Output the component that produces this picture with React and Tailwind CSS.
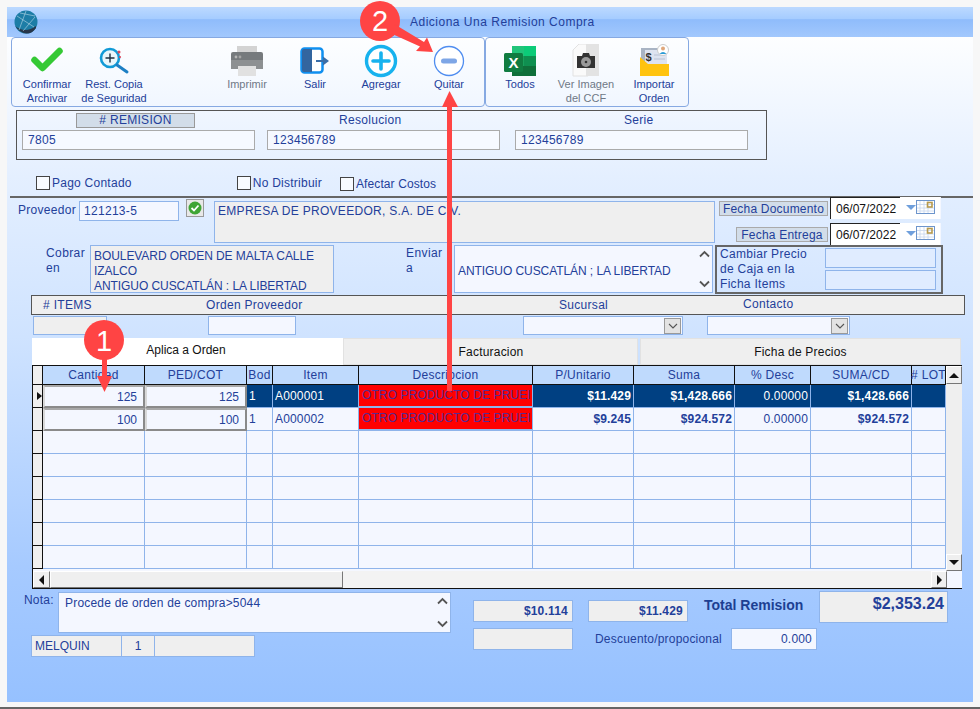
const font = "font-['Liberation_Sans',Arial,sans-serif]";

function Chevron({ up }) {
  return (
    <svg width="11" height="8" viewBox="0 0 11 8">
      <path d={up ? "M1 6.5 5.5 2 10 6.5" : "M1 1.5 5.5 6 10 1.5"} fill="none" stroke="#555" strokeWidth="1.8" />
    </svg>
  );
}

function VScroll() {
  return (
    <div className="w-[16px] shrink-0 self-stretch flex flex-col items-center justify-between bg-[#f4f7ff] py-[4px]">
      <Chevron up />
      <Chevron />
    </div>
  );
}

function ToolButton({ icon, lines, muted, className = "" }) {
  return (
    <div className={`w-[66px] shrink-0 flex flex-col items-center pt-[6px] text-[11px] leading-[14px] ${muted ? "text-[#6f7886]" : "text-[#23409a]"} ${className}`}>
      <div className="h-[33px] w-full flex items-center justify-center">{icon}</div>
      {lines.map((l) => (
        <span key={l} className="whitespace-nowrap">{l}</span>
      ))}
    </div>
  );
}

const IconCheck = () => (
  <svg width="36" height="30" viewBox="0 0 36 30"><path d="M5.500 14 13.500 22 30.500 5" fill="none" stroke="#35c935" strokeWidth="6.500" strokeLinecap="round" strokeLinejoin="round" /></svg>
);
const IconSearch = () => (
  <svg width="32" height="30" viewBox="0 0 32 30">
    <circle cx="12" cy="12" r="9" fill="#e9f6fb" stroke="#119ad6" strokeWidth="2.6" />
    <path d="M12 7.5v9M7.5 12h9" stroke="#1f2f3f" strokeWidth="1.4" />
    <path d="M19 19 29 26" stroke="#1d7fc4" strokeWidth="3" strokeLinecap="round" />
    <circle cx="21" cy="6" r="1.5" fill="#e0475a" />
    <circle cx="22" cy="11" r="1.1" fill="#e0475a" />
  </svg>
);
const IconPrinter = () => (
  <svg width="34" height="32" viewBox="0 0 34 32">
    <rect x="7" y="1" width="20" height="8" fill="#d3d3d3" />
    <path d="M1 9q0-2 2-2h28q2 0 2 2v15H1z" fill="#767a7d" />
    <rect x="1" y="15" width="32" height="9" fill="#8d9092" />
    <circle cx="6" cy="12" r="1.4" fill="#b5b5b5" /><circle cx="10" cy="12" r="1.4" fill="#a5a5a5" />
    <rect x="8" y="21" width="18" height="10" fill="#e1e1e1" />
  </svg>
);
const IconExit = () => (
  <svg width="30" height="30" viewBox="0 0 30 30">
    <rect x="1.5" y="2.5" width="21" height="24" rx="3" fill="#fff" stroke="#0f8ff0" strokeWidth="2.5" />
    <path d="M2 5q0-2 2-2h8v23H4q-2 0-2-2z" fill="#33659f" />
    <path d="M16 15h8" stroke="#3a6ea8" strokeWidth="2" />
    <path d="M23 10.5 29 15l-6 4.5z" fill="#3a6ea8" />
  </svg>
);
const IconPlus = () => (
  <svg width="34" height="34" viewBox="0 0 34 34">
    <circle cx="17" cy="17" r="14.5" fill="#fff" stroke="#17b2ee" strokeWidth="3.4" />
    <path d="M17 9v16M9 17h16" stroke="#17b2ee" strokeWidth="3.6" strokeLinecap="round" />
  </svg>
);
const IconMinus = () => (
  <svg width="32" height="32" viewBox="0 0 32 32">
    <circle cx="16" cy="16" r="14.5" fill="#fff" stroke="#4f8df0" strokeWidth="1.3" />
    <rect x="8" y="13.5" width="16" height="5" rx="2.5" fill="#7ea6e6" />
  </svg>
);
const IconExcel = () => (
  <svg width="34" height="32" viewBox="0 0 34 32">
    <rect x="9" y="1" width="24" height="10" fill="#21c47a" />
    <rect x="9" y="11" width="24" height="10" fill="#19a05b" />
    <rect x="9" y="21" width="24" height="10" fill="#0f6f3a" />
    <rect x="21" y="1" width="12" height="10" fill="#0ccb78" />
    <rect x="21" y="11" width="12" height="10" fill="#0f8f50" />
    <rect x="1" y="8" width="19" height="19" rx="1.5" fill="#107c41" />
    <text x="10.5" y="23" textAnchor="middle" fontFamily="Liberation Sans" fontWeight="700" fontSize="15" fill="#fff">X</text>
  </svg>
);
const IconCamera = () => (
  <svg width="28" height="33" viewBox="0 0 28 33">
    <path d="M1 6 7 0h9v32H1z" fill="#fafafa" stroke="#e2e2e2" />
    <rect x="14" y="0" width="13" height="32" fill="#e3e3e3" />
    <path d="M5 12h5l1-3h6l1 3h5v12H5z" fill="#333" />
    <circle cx="14" cy="18" r="5" fill="#9a9a9a" />
    <circle cx="14" cy="18" r="1.3" fill="#333" />
  </svg>
);
const IconImport = () => (
  <svg width="31" height="34" viewBox="0 0 31 34">
    <rect x="2" y="4" width="26" height="20" fill="#a9b4c4" />
    <rect x="6" y="6" width="22" height="18" fill="#dde3f0" />
    <text x="9.5" y="17" textAnchor="middle" fontFamily="Liberation Sans" fontWeight="700" fontSize="11" fill="#333">$</text>
    <path d="M15 11h11M15 15h11" stroke="#b9c2d4" />
    <path d="M1 13 9 20h21v12H1z" fill="#ffc30f" />
    <circle cx="24" cy="6" r="5.5" fill="#fff" stroke="#ccc" />
    <circle cx="24" cy="4.5" r="2" fill="#e0a77b" />
    <path d="M20.5 10q3.5-4 7 0z" fill="#2a9bd6" />
  </svg>
);

const inputBase = "border border-[#8fb4ea] bg-[#f4f7ff] text-[#23409a]";
const grayBase = "border border-[#8fb4ea] bg-[#efefef] text-[#23409a]";

function Check({ label, className = "" }) {
  return (
    <div className={`flex items-center ${className}`}>
      <span className="w-[14px] h-[14px] border border-[#444] bg-[#f8fbff]" />
      <span className="ml-[2px] pt-[1px] whitespace-nowrap">{label}</span>
    </div>
  );
}

function DateBox() {
  return (
    <div className="w-[111px] h-[22px] flex bg-white text-[12px] text-[#111] tracking-normal border-r border-[#f4f7ff]">
      <div className="w-[70px] h-[22px] border-l border-t border-[#222] pl-[5px] pt-[2px] flex items-center">06/07/2022</div>
      <div className="flex-1 flex items-center pl-[6px] pb-[2px]">
        <span className="w-0 h-0 border-x-[5px] border-x-transparent border-t-[5px] border-t-[#6f9fdc]" />
        <svg width="19" height="14" viewBox="0 0 19 14">
          <rect x="0.5" y="0.5" width="18" height="13" fill="#fff" stroke="#6d95cc" />
          <path d="M4 1v12M8 1v12M12 1v12M1 4.5h17M1 8h17M1 11h17" stroke="#c6d5ec" strokeWidth="0.8" />
          <rect x="11.5" y="2.5" width="4.5" height="4.5" fill="none" stroke="#b79a4d" strokeWidth="1.6" />
        </svg>
      </div>
    </div>
  );
}

function SelectBox({ w, ml }) {
  return (
    <div className={`${inputBase} ${w} ${ml} h-[19px] flex items-center justify-end pr-[1px]`}>
      <span className="w-[17px] h-[16px] bg-[#e3e3e3] border border-[#999] flex items-center justify-center">
        <svg width="10" height="6" viewBox="0 0 10 6"><path d="M1 1 5 5 9 1" fill="none" stroke="#555" strokeWidth="1.1" /></svg>
      </span>
    </div>
  );
}

const gridCols = "grid grid-cols-[10px_102px_102px_26px_86px_174px_101px_101px_76px_101px_34px]";
const headers = ["Cantidad", "PED/COT", "Bod", "Item", "Descripcion", "P/Unitario", "Suma", "% Desc", "SUMA/CD", "# LOT"];
const rows = [
  { q: "125", b: "1", i: "A000001", p: "$11.429", s: "$1,428.666", d: "0.00000", c: "$1,428.666", sel: true },
  { q: "100", b: "1", i: "A000002", p: "$9.245", s: "$924.572", d: "0.00000", c: "$924.572" },
];

function DataRow({ r }) {
  const cell = `border-r border-b border-[#8fb4ea] h-[23px] flex items-center px-[2px] whitespace-nowrap overflow-hidden tracking-[0.15px] ${r.sel ? "bg-[#004082] text-white" : "bg-[#f4f7ff] text-[#23409a]"}`;
  const bevel = "h-[23px] bg-[#f4f7ff] border-2 border-[#8a8a8a] border-t-[#a8a8a8] border-l-[#d8d8d8] flex items-center justify-end pr-[6px] pt-[1px] text-[#23409a] text-[12px]";
  return (
    <div className={gridCols}>
      <div className="h-[23px] bg-[#efefef] border-r border-b border-[#111] flex items-center">
        {r.sel && <span className="ml-[4px] w-0 h-0 border-y-[4px] border-y-transparent border-l-[5px] border-l-[#111]" />}
      </div>
      <div className={bevel}>{r.q}</div>
      <div className={bevel}>{r.q}</div>
      <div className={cell}>{r.b}</div>
      <div className={cell}>{r.i}</div>
      <div className="h-[23px] bg-[#8fb4ea] pb-[2px] pr-[1px]">
        <div className="h-[21px] bg-[#ff0000] text-[#5a2a92] pl-[3px] flex items-center whitespace-nowrap overflow-hidden tracking-[0.1px]">OTRO PRODUCTO DE PRUEI</div>
      </div>
      <div className={`${cell} justify-end font-bold`}>{r.p}</div>
      <div className={`${cell} justify-end font-bold`}>{r.s}</div>
      <div className={`${cell} justify-end`}>{r.d}</div>
      <div className={`${cell} justify-end font-bold`}>{r.c}</div>
      <div className={cell} />
    </div>
  );
}

function EmptyRow() {
  const cell = "h-[23px] border-r border-b border-[#8fb4ea] bg-[#f4f7ff]";
  return (
    <div className={gridCols}>
      <div className="h-[23px] bg-[#efefef] border-r border-b border-[#111]" />
      {Array.from({ length: 10 }).map((_, i) => (
        <div key={i} className={cell} />
      ))}
    </div>
  );
}

function Triangle({ dir }) {
  const map = {
    up: "border-x-[5px] border-x-transparent border-b-[5px] border-b-[#111]",
    down: "border-x-[5px] border-x-transparent border-t-[5px] border-t-[#111]",
    left: "border-y-[5px] border-y-transparent border-r-[5px] border-r-[#111]",
    right: "border-y-[5px] border-y-transparent border-l-[5px] border-l-[#111]",
  };
  return <span className={`w-0 h-0 ${map[dir]}`} />;
}

const bevelBtn = "bg-[#efefef] border border-[#fff] border-r-[#777] border-b-[#777] flex items-center justify-center";

function DataGrid() {
  return (
    <div className="ml-[25px] w-[930px] h-[224px] border-t border-l border-[#111] flex flex-col bg-[#f4f7ff]">
      <div className="flex h-[205px]">
        <div className="w-[913px] shrink-0 overflow-hidden">
          <div className={gridCols}>
            <div className="h-[19px] bg-[#efefef] border-r border-b border-[#111]" />
            {headers.map((h) => (
              <div key={h} className="h-[19px] bg-[#bfdafd] border-r border-b border-[#111] flex items-center justify-center text-[#23409a] whitespace-nowrap tracking-[0.3px]">
                {h}
              </div>
            ))}
          </div>
          {rows.map((r) => <DataRow key={r.i} r={r} />)}
          {Array.from({ length: 6 }).map((_, i) => <EmptyRow key={i} />)}
        </div>
        <div className="w-[16px] flex flex-col bg-[#efefef]">
          <div className={`${bevelBtn} h-[18px]`}><Triangle dir="up" /></div>
          <div className="flex-1" />
          <div className={`${bevelBtn} h-[17px]`}><Triangle dir="down" /></div>
        </div>
      </div>
      <div className="flex h-[18px] border-b border-[#111]">
        <div className={`${bevelBtn} w-[17px] h-[17px]`}><Triangle dir="left" /></div>
        <div className={`${bevelBtn} w-[293px] h-[17px]`} />
        <div className="w-[588px] h-[17px] bg-[#f3f3f3]" />
        <div className={`${bevelBtn} w-[16px] h-[17px]`}><Triangle dir="right" /></div>
        <div className="flex-1 bg-[#f4f7ff]" />
      </div>
    </div>
  );
}

function Overlay() {
  return (
    <svg className="absolute left-0 top-0 pointer-events-none" width="980" height="709" viewBox="0 0 980 709">
      <g fill="#ff4444" stroke="none">
        <circle cx="380" cy="21" r="20" />
        <circle cx="104" cy="340" r="20" />
        <rect x="447" y="105" width="5" height="286" />
        <path d="M449.5 91 458 107H442z" />
        <rect x="102" y="358" width="5" height="20" />
        <path d="M104.5 392 97 376h15z" />
        <path d="M392 29 395 24.500 424 42 427 37.500 433 52 416 51 420 46.500 390 33z" />
      </g>
      <text x="380" y="31" textAnchor="middle" fontFamily="Liberation Sans" fontSize="29" fill="#fff">2</text>
      <text x="104" y="351" textAnchor="middle" fontFamily="Liberation Sans" fontSize="29" fill="#fff">1</text>
    </svg>
  );
}

export default function App() {
  return (
    <div className={`${font} relative w-[980px] h-[709px] overflow-hidden bg-[#f7f7f7] px-[7px] pt-[7px] text-[12px] leading-[15px] text-[#23409a] border-b-2 border-[#666]`}>
      <div className="w-[966px] h-[695px] flex flex-col bg-[linear-gradient(to_bottom,#fdfeff_30px,#e4efff_170px,#cfe3ff_330px,#a6caff_560px,#96c1ff_100%)]">
        {/* Title bar */}
        <div className="h-[30px] shrink-0 flex items-center bg-[linear-gradient(to_bottom,#bcd9ff_0%,#a5ccff_40%,#8fbcfb_42%,#a2c8fd_100%)]">
          <svg className="ml-[7px]" width="24" height="24" viewBox="0 0 24 24">
            <circle cx="12" cy="12" r="11.500" fill="#1d7da6" />
            <path d="M1 16q10 8 21 0v2q-4 6-10 5.500T1 16z" fill="#27364a" />
            <path d="M3 6 20 17M12 1 5 20M21 6 6 3M21 7 9 21" stroke="#b8d9e8" strokeWidth="0.6" fill="none" />
          </svg>
          <span className="ml-[372px] pt-[1px] text-[12px] tracking-[0.5px] text-[#23409a] whitespace-nowrap">Adiciona Una Remision Compra</span>
        </div>

        {/* Toolbar */}
        <div className="h-[70px] shrink-0 flex ml-[4px]">
          <div className="w-[474px] h-[70px] border border-[#86a9e2] rounded-[4px] flex pl-[2px]">
            <ToolButton icon={<IconCheck />} lines={["Confirmar", "Archivar"]} />
            <ToolButton className="ml-[1px]" icon={<IconSearch />} lines={["Rest. Copia", "de Seguridad"]} />
            <ToolButton className="ml-[67px]" muted icon={<IconPrinter />} lines={["Imprimir"]} />
            <ToolButton className="ml-[2px]" icon={<IconExit />} lines={["Salir"]} />
            <ToolButton icon={<IconPlus />} lines={["Agregar"]} />
            <ToolButton className="ml-[2px]" icon={<IconMinus />} lines={["Quitar"]} />
          </div>
          <div className="w-[204px] h-[70px] border border-[#86a9e2] rounded-[4px] flex pl-[1px]">
            <ToolButton icon={<IconExcel />} lines={["Todos"]} />
            <ToolButton muted icon={<IconCamera />} lines={["Ver Imagen", "del CCF"]} />
            <ToolButton className="ml-[2px]" icon={<IconImport />} lines={["Importar", "Orden"]} />
          </div>
        </div>

        {/* Remision panel */}
        <div className="ml-[9px] mt-[3px] w-[751px] h-[50px] shrink-0 border border-[#555] flex pl-[5px] pt-[2px] tracking-[0.3px]">
          <div className="w-[233px] flex flex-col">
            <div className="ml-[54px] w-[119px] h-[15px] bg-[#d2dde9] border border-[#999] text-center leading-[13px]"># REMISION</div>
            <div className="border border-[#aaa] bg-[#f6f9ff] h-[20px] mt-[2px] pl-[5px] pt-[1px] flex items-center">7805</div>
          </div>
          <div className="w-[233px] ml-[12px] flex flex-col">
            <div className="h-[15px] pl-[72px]">Resolucion</div>
            <div className="border border-[#aaa] bg-[#f6f9ff] h-[20px] mt-[2px] pl-[5px] pt-[1px] flex items-center">123456789</div>
          </div>
          <div className="w-[233px] ml-[15px] flex flex-col">
            <div className="h-[15px] pl-[109px]">Serie</div>
            <div className="border border-[#aaa] bg-[#f6f9ff] h-[20px] mt-[2px] pl-[5px] pt-[1px] flex items-center">123456789</div>
          </div>
        </div>

        {/* Checks */}
        <div className="h-[36px] shrink-0 flex tracking-[0.25px] pt-[15px]">
          <Check className="ml-[29px] h-[15px]" label="Pago Contado" />
          <Check className="ml-[105px] h-[15px]" label="No Distribuir" />
          <Check className="ml-[18px] h-[15px] mt-[1px] tracking-[0.1px]" label="Afectar Costos" />
        </div>
        <div className="ml-[3px] h-[2px] shrink-0 bg-[#666]" />

        {/* Proveedor */}
        <div className="h-[47px] shrink-0 flex items-start tracking-[0.3px]">
          <span className="ml-[11px] mt-[5px] w-[61px]">Proveedor</span>
          <div className={`${inputBase} mt-[3px] w-[100px] h-[20px] pl-[4px] pt-[1px] flex items-center`}>121213-5</div>
          <div className="ml-[7px] mt-[1px] w-[18px] h-[18px] bg-[#e8e8e8] border border-[#999] flex items-center justify-center">
            <svg width="14" height="14" viewBox="0 0 14 14">
              <circle cx="7" cy="7" r="6.500" fill="#3fa535" />
              <path d="M3.500 7 6 9.500 10.500 4.500" fill="none" stroke="#fff" strokeWidth="1.8" />
            </svg>
          </div>
          <div className={`${grayBase} ml-[10px] mt-[3px] w-[501px] h-[42px] px-[3px] pt-[2px]`}>EMPRESA DE PROVEEDOR, S.A. DE C.V.</div>
          <div className="flex flex-col w-[224px] ml-[4px] tracking-[0.2px]">
            <div className="flex h-[25px]">
              <div className="mt-[3px] w-[109px] h-[15px] pt-[1px] bg-[#d2dde9] border border-[#aaa] flex items-center justify-center">Fecha Documento</div>
              <div className="ml-[2px] mt-[-1px]"><DateBox /></div>
            </div>
            <div className="flex">
              <div className="ml-[17px] mt-[4px] w-[92px] h-[15px] pt-[1px] bg-[#d2dde9] border border-[#aaa] flex items-center justify-center">Fecha Entrega</div>
              <div className="ml-[2px]"><DateBox /></div>
            </div>
          </div>
        </div>

        {/* Cobrar / Enviar */}
        <div className="h-[50px] shrink-0 flex items-start tracking-[-0.07px]">
          <span className="ml-[39px] mt-[1px] w-[44px] tracking-[0.4px]">Cobrar<br />en</span>
          <div className={`${grayBase} w-[244px] h-[48px] pl-[3px] pt-[3px]`}>
            BOULEVARD ORDEN DE MALTA CALLE<br />IZALCO<br />ANTIGUO CUSCATLÁN : LA LIBERTAD
          </div>
          <span className="ml-[72px] mt-[1px] w-[48px] tracking-[0.4px]">Enviar<br />a</span>
          <div className={`${inputBase} w-[259px] h-[48px] flex items-center pl-[3px]`}>
            <span className="flex-1 whitespace-nowrap pt-[4px]">ANTIGUO CUSCATLÁN ; LA LIBERTAD</span>
            <VScroll />
          </div>
          <div className="ml-[2px] w-[228px] h-[49px] border-2 border-[#666] flex pl-[3px] tracking-[0.3px]">
            <span className="w-[105px] whitespace-nowrap">Cambiar Precio<br />de Caja en la<br />Ficha Items</span>
            <div className="flex flex-col pt-[1px] gap-[2px]">
              <div className="border border-[#8fb4ea] bg-[#e0ecff] w-[111px] h-[20px]" />
              <div className="border border-[#8fb4ea] bg-[#e0ecff] w-[111px] h-[20px]" />
            </div>
          </div>
        </div>

        {/* Items header */}
        <div className="ml-[24px] w-[934px] h-[20px] shrink-0 bg-[#efefef] border border-[#555] grid grid-cols-[70px_302px_288px_274px] items-center tracking-[0.3px]">
          <span className="text-center pl-[1px]"># ITEMS</span>
          <span className="pl-[104px] whitespace-nowrap">Orden Proveedor</span>
          <span className="pl-[155px] whitespace-nowrap">Sucursal</span>
          <span className="pl-[51px] whitespace-nowrap -mt-[2px]">Contacto</span>
        </div>

        {/* Filters */}
        <div className="h-[19px] mt-[1px] shrink-0 flex">
          <div className={`${grayBase} ml-[26px] w-[74px] h-[19px]`} />
          <div className={`${inputBase} ml-[101px] w-[88px] h-[19px]`} />
          <SelectBox w="w-[160px]" ml="ml-[227px]" />
          <SelectBox w="w-[143px]" ml="ml-[24px]" />
        </div>

        {/* Tabs */}
        <div className="h-[27px] mt-[3px] shrink-0 flex ml-[25px] text-[#111] text-[12px]">
          <div className="w-[311px] h-[27px] bg-white flex items-center justify-center pb-[2px] pr-[3px]">Aplica a Orden</div>
          <div className="w-[295px] h-[27px] pt-[2px] bg-[#efefef] border border-[#e2e2e2] flex items-center justify-center pl-[1px] tracking-[0.2px]">Facturacion</div>
          <div className="ml-[2px] w-[321px] h-[27px] pt-[2px] bg-[#efefef] border border-[#e2e2e2] flex items-center justify-center tracking-[0.2px]">Ficha de Precios</div>
        </div>

        <DataGrid />

        {/* Bottom */}
        <div className="flex flex-1 tracking-[0.2px]">
          <div className="w-[466px] flex flex-col">
            <div className="flex items-start mt-[3px]">
              <span className="ml-[17px] mt-[1px] w-[34px]">Nota:</span>
              <div className={`${inputBase} w-[393px] h-[41px] flex pl-[6px] pt-[3px]`}>
                <span className="flex-1">Procede de orden de compra&gt;5044</span>
                <div className="-mt-[3px] flex"><VScroll /></div>
              </div>
            </div>
            <div className="flex ml-[24px] mt-[2px] h-[22px] tracking-normal">
              <div className={`${grayBase} w-[91px] pl-[3px] flex items-center`}>MELQUIN</div>
              <div className={`${grayBase} w-[33px] border-l-0 flex items-center justify-center`}>1</div>
              <div className={`${grayBase} w-[100px] border-l-0`} />
            </div>
          </div>
          <div className="w-[100px] flex flex-col pt-[11px] gap-[6px]">
            <div className={`${grayBase} h-[22px] font-bold flex items-center justify-end pr-[4px] tracking-[0.2px]`}>$10.114</div>
            <div className={`${grayBase} h-[22px]`} />
          </div>
          <div className="ml-[15px] flex flex-col pt-[2px]">
            <div className="flex items-start">
              <div className={`${grayBase} mt-[9px] w-[100px] h-[22px] font-bold flex items-center justify-end pr-[4px] tracking-[0.2px]`}>$11.429</div>
              <span className="ml-[16px] mt-[7px] w-[115px] text-[14px] font-bold text-[#1d3f92] whitespace-nowrap tracking-normal">Total Remision</span>
              <div className={`${grayBase} w-[129px] h-[32px] text-[16px] leading-[18px] font-bold text-right pr-[3px] pt-[3px] text-[#1d3f92] tracking-normal`}>$2,353.24</div>
            </div>
            <div className="flex items-center mt-[5px]">
              <span className="ml-[7px] w-[136px] whitespace-nowrap">Descuento/propocional</span>
              <div className={`${inputBase} w-[86px] h-[22px] flex items-center justify-end pr-[4px]`}>0.000</div>
            </div>
          </div>
        </div>
      </div>
      <Overlay />
    </div>
  );
}
